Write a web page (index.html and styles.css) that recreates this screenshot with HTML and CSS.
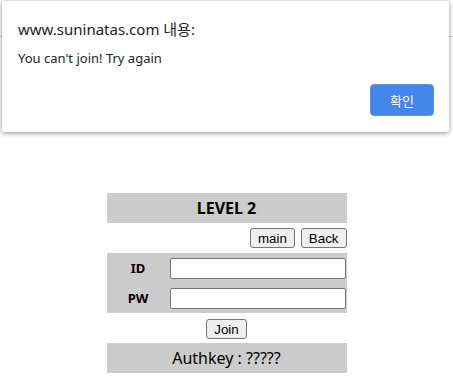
FILE: index.html
```html
<!DOCTYPE html>
<html lang="ko">
<head>
    <meta charset="UTF-8">
    <title>Suninatas Level 2</title>
    <link rel="stylesheet" href="styles.css">
</head>
<body>
    <div class="topline"></div>

    <!-- Login table -->
    <table class="level">
        <tr>
            <th colspan="2" class="gray title">LEVEL 2</th>
        </tr>
        <tr>
            <td colspan="2" class="nav">
                <div class="nav-buttons">
                    <button>main</button>
                    <button>Back</button>
                </div>
            </td>
        </tr>
        <tr class="gray">
            <td class="label">ID</td>
            <td class="field"><input type="text"></td>
        </tr>
        <tr class="gray">
            <td class="label">PW</td>
            <td class="field"><input type="password"></td>
        </tr>
        <tr>
            <td colspan="2" class="center"><button>Join</button></td>
        </tr>
        <tr>
            <td colspan="2" class="gray authkey">Authkey : ?????</td>
        </tr>
    </table>

    <!-- Alert dialog -->
    <div class="dialog">
        <div class="dialog-title">www.suninatas.com 내용:</div>
        <div class="dialog-msg">You can't join! Try again</div>
        <div class="dialog-actions">
            <button class="ok">확인</button>
        </div>
    </div>
</body>
</html>
```

FILE: styles.css
```css
* {
    box-sizing: border-box;
}

body {
    margin: 0;
    background-color: #fff;
    font-family: "Noto Sans", "Noto Sans CJK KR", sans-serif;
    color: #000;
}

.topline {
    height: 37px;
    border-bottom: 1px solid #d4d4d4;
}

.level {
    margin: 156px auto 0;
    width: 240px;
    border-collapse: collapse;
}

.level td, .level th {
    padding: 0;
    height: 30px;
}

.gray {
    background-color: #cccccc;
}

.title {
    font-size: 16px;
    font-weight: bold;
    text-align: center;
}

.nav-buttons {
    display: flex;
    justify-content: flex-end;
    gap: 6px;
}

button {
    font-family: "Liberation Sans", Arial, sans-serif;
    font-size: 13.33px;
    height: 20px;
    padding: 0 7px;
    background-color: #efefef;
    border: 1px solid #767676;
    border-radius: 3px;
    color: #000;
}

.label {
    width: 63px;
    text-align: center;
    font-size: 13px;
    font-weight: bold;
}

.field input {
    display: block;
    width: 176px;
    height: 21px;
    border: 1px solid #767676;
    border-radius: 2px;
    background: #fff;
}

.center {
    text-align: center;
}

.authkey {
    text-align: center;
    font-size: 16px;
}

/* Alert dialog on top */
.dialog {
    position: absolute;
    top: 1px;
    left: 2px;
    width: 447px;
    height: 131px;
    background-color: #fff;
    border-radius: 2px;
    box-shadow: 0 1px 5px rgba(0, 0, 0, 0.45);
    padding: 17px 16px 0 16px;
}

.dialog-title {
    font-size: 15px;
    color: #222;
}

.dialog-msg {
    margin-top: 10px;
    font-size: 13px;
    color: #222;
}

.dialog-actions {
    display: flex;
    justify-content: flex-end;
    margin-top: 17px;
}

.ok {
    width: 64px;
    height: 32px;
    margin-right: -1px;
    padding: 0;
    background-color: #4487eb;
    border: 1px solid #5894ec;
    border-radius: 4px;
    color: #fff;
    font-family: "Noto Sans CJK KR", sans-serif;
    font-size: 13px;
}
```
